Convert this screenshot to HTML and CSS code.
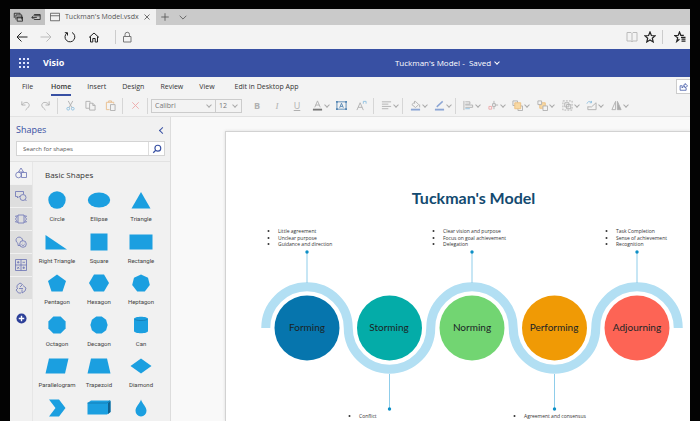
FILE: index.html
```html
<!DOCTYPE html>
<html lang="en">
<head>
    <meta charset="UTF-8">
    <meta name="viewport" content="width=device-width, initial-scale=1.0">
    <title>Tuckman's Model.vsdx</title>
    <link rel="stylesheet" href="styles.css">
</head>
<body>
    <div class="screen">
        <!-- browser tabs -->
        <div class="tab-strip">
            <div class="tab-tools">
                <button aria-label="Tabs set aside"><svg class="icon" viewBox="0 0 12 12"><path d="M1.500 7V1.500h7V3M3.500 9V3.500h7V9M5 6h6.500v5H5zM5 7h6.500"/></svg></button>
                <button aria-label="Set tabs aside"><svg class="icon" viewBox="0 0 12 12"><path d="M4 4V3h7v6H4V8M4 4.500h7M7 6.500H1M3 4.500L1 6.500l2 2"/></svg></button>
            </div>
            <div class="tab">
                <svg class="icon" viewBox="0 0 12 12"><path d="M.5 1.500h11v9H.5zM.5 4.500h11"/></svg>
                <span class="tab-title">Tuckman's Model.vsdx</span>
                <button aria-label="Close tab"><svg class="icon" viewBox="0 0 12 12"><path d="M3 3l6 6M9 3l-6 6"/></svg></button>
            </div>
            <button class="new-tab" aria-label="New tab"><svg class="icon" viewBox="0 0 12 12"><path d="M6 1.500v9M1.500 6h9"/></svg></button>
            <button aria-label="Tab previews"><svg class="icon" viewBox="0 0 12 12"><path d="M2 4.500L6 8.500l4-4"/></svg></button>
        </div>

        <!-- address bar -->
        <div class="address-bar">
            <button aria-label="Back"><svg class="icon" viewBox="0 0 12 12"><path d="M11.500 6H1M5.500 1.500L1 6l4.500 4.500"/></svg></button>
            <button class="off" aria-label="Forward"><svg class="icon" viewBox="0 0 12 12"><path d="M.5 6H11M6.500 1.500L11 6l-4.500 4.500"/></svg></button>
            <button aria-label="Refresh"><svg class="icon" viewBox="0 0 12 12"><path d="M3 2A4.900 4.900 0 1 0 8 1.500M3.500 4.500V1.700H.8"/></svg></button>
            <button aria-label="Home page"><svg class="icon" viewBox="0 0 12 12"><path d="M1 6.500L6 2l5 4.500M2.500 5.500V11h2.300V7.500h2.400V11h2.300V5.500"/></svg></button>
            <span class="bar-line"></span>
            <svg class="icon lock" viewBox="0 0 12 12"><path d="M1.500 5.500h7.500v5.500H1.500zM3 5.500V3.500a2.200 2.200 0 0 1 4.500 0v2"/></svg>
            <div class="address-end">
                <button class="off" aria-label="Reading view"><svg class="icon" viewBox="0 0 12 12"><path d="M6 2.500v8M1 1.500h4l1 1 1-1h4v8.500H7l-1 .8-1-.8H1z"/></svg></button>
                <button aria-label="Add to favorites"><svg class="icon bold" viewBox="0 0 12 12"><path d="M6 1l1.400 3.500 3.700.3-2.800 2.400.9 3.700L6 8.900l-3.200 2 .9-3.700L.9 4.800l3.700-.3z"/></svg></button>
                <span class="bar-line"></span>
                <button aria-label="Hub"><svg class="icon bold" viewBox="0 0 12 12"><path d="M5.500 8.200L2.700 10.500l1-3.700L.9 4.600l3.400-.3L5.500 1l1.300 3.300h3M7 6.300h4.500M7.500 8.200h4M7.500 10.100h4"/></svg></button>
            </div>
        </div>

        <header class="app-header">
            <button aria-label="App launcher"><svg class="waffle" viewBox="0 0 10 10"><path d="M0 0h2v2H0zM4 0h2v2H4zM8 0h2v2H8zM0 4h2v2H0zM4 4h2v2H4zM8 4h2v2H8zM0 8h2v2H0zM4 8h2v2H4zM8 8h2v2H8z"/></svg></button>
            <span class="app-name">Visio</span>
            <button class="doc-name">Tuckman's Model -&nbsp; Saved <i class="chevron"></i></button>
        </header>

        <nav class="menu">
            <a href="#">File</a>
            <a href="#" class="active">Home</a>
            <a href="#">Insert</a>
            <a href="#">Design</a>
            <a href="#">Review</a>
            <a href="#">View</a>
            <a href="#" class="desktop">Edit in Desktop App</a>
            <button class="share" aria-label="Share"><svg class="icon" viewBox="0 0 12 12"><path d="M4 5H1.500v6h8V8M4 8c0-3 1.500-4 4-4V2l3.500 3.200L8 8V6C6 6 5 6.500 4 8z"/></svg></button>
        </nav>

        <div class="toolbar">
            <button aria-label="Undo"><svg class="icon" viewBox="0 0 12 12"><path d="M2 1.500v4h4M2 5.500C4 2 9 1.500 10 5c.5 2-1 3-4 6"/></svg></button>
            <button aria-label="Redo"><svg class="icon" viewBox="0 0 12 12"><path d="M10 1.500v4H6M10 5.500C8 2 3 1.500 2 5c-.5 2 1 3 4 6"/></svg></button>
            <span class="line"></span>
            <button aria-label="Cut"><svg class="icon" viewBox="0 0 12 12"><path d="M3.500 1l4.200 7.500M8.500 1L4.300 8.500"/><g class="blue"><circle cx="3.500" cy="9.500" r="1.500"/><circle cx="8.500" cy="9.500" r="1.500"/></g></svg></button>
            <button aria-label="Copy"><svg class="icon" viewBox="0 0 12 12"><path d="M5 9H1V1.500h4.500V3M5 3.500h3.500l2.500 2.500v5H5zM8.500 3.500V6H11"/></svg></button>
            <button aria-label="Paste"><svg class="icon" viewBox="0 0 12 12"><path class="orange" d="M5 10.500H1.500V2.500h8V4M4 2.500V1h3v1.500"/><path d="M6 5h5v6.500H6z"/></svg></button>
            <span class="line"></span>
            <button aria-label="Delete"><svg class="icon red" viewBox="0 0 12 12"><path d="M2.500 2.500l7 7M9.500 2.500l-7 7"/></svg></button>
            <span class="line"></span>
            <label class="picker font">
                <select aria-label="Font"><option>Calibri</option></select>
                <i class="chevron"></i>
            </label>
            <label class="picker size">
                <select aria-label="Font size"><option>12</option></select>
                <i class="chevron"></i>
            </label>
            <button class="bold-letter">B</button>
            <button class="italic-letter">I</button>
            <button class="under-letter">U</button>
            <button class="drop" aria-label="Font color"><svg class="icon" viewBox="0 0 12 12"><path d="M3 8l3-7 3 7M4 5.500h4"/><path class="bar-dark" d="M1 10.500h10"/></svg><i class="chevron"></i></button>
            <button aria-label="Text box"><svg class="icon text-box" viewBox="0 0 12 12"><path d="M1 2h10v8H1z"/><path d="M4 8.500L6 3.500l2 5M4.700 7h2.600"/><path class="dots" d="M0 1h2v2H0zM10 1h2v2h-2zM0 9h2v2H0zM10 9h2v2h-2z"/></svg></button>
            <button aria-label="Grow font"><svg class="icon" viewBox="0 0 12 12"><path d="M1 11l3.500-8L8 11M2.300 8h4.400"/><path class="blue" d="M8 4V1.500h3V4"/></svg></button>
            <span class="line"></span>
            <button class="drop" aria-label="Align text"><svg class="icon" viewBox="0 0 12 12"><path d="M1 2h10M1 4.500h7M1 7h10M1 9.500h7"/></svg><i class="chevron"></i></button>
            <span class="line"></span>
            <button class="drop" aria-label="Fill"><svg class="icon" viewBox="0 0 12 12"><path d="M2 5l4-3.500L9.500 5 6 8.200zM5 4V1M10.500 5v3"/><path class="bar-blue" d="M1 10.500h10"/></svg><i class="chevron"></i></button>
            <button class="drop" aria-label="Line"><svg class="icon" viewBox="0 0 12 12"><path class="pen" d="M3 7.500L9.500 1.500"/><path class="bar-blue" d="M1 10.500h10"/></svg><i class="chevron"></i></button>
            <span class="line"></span>
            <div class="arrange">
                <button class="drop" aria-label="Align"><svg class="icon" viewBox="0 0 12 12"><path d="M1 1v10M2.500 2h5v2.500h-5M2.500 5.500h8V8h-8"/><path class="blue" d="M2.500 9.500h5"/></svg><i class="chevron"></i></button>
                <button class="drop" aria-label="Rotate"><svg class="icon" viewBox="0 0 12 12"><path d="M5 4h3v3H5zM6.500 1v3M8 5.500h3M6.500 7v3"/><path class="red" d="M1 7h3v3H1z"/></svg><i class="chevron"></i></button>
                <button class="drop" aria-label="Bring to front"><svg class="icon" viewBox="0 0 12 12"><path d="M1 1h5v5H1zM6.500 6.500h5v5h-5z"/><path class="box" d="M3 3h6.500v6.500H3z"/></svg><i class="chevron"></i></button>
                <button class="drop" aria-label="Send to back"><svg class="icon" viewBox="0 0 12 12"><path class="box" d="M3 3h6v6H3z"/><path class="paper" d="M1 1h4v4H1zM6.500 6.500h5v5h-5z"/></svg><i class="chevron"></i></button>
                <button class="drop" aria-label="Group"><svg class="icon" viewBox="0 0 12 12"><path d="M3 3h4.500v4.500H3zM5 5h4.500v4.500H5z"/><path stroke-dasharray="2 1.300" d="M1 1h10v10H1z"/></svg><i class="chevron"></i></button>
                <button class="drop" aria-label="Change shape"><svg class="icon" viewBox="0 0 12 12"><path d="M2 7v3.500h9V3L6 7.500H2"/><path class="blue" d="M1 4c1-3 4-3 5-1M6 1v2H4"/></svg><i class="chevron"></i></button>
                <button class="drop" aria-label="Flip"><svg class="icon" viewBox="0 0 12 12"><path d="M5 1.500v9H1z"/><path class="solid" d="M7 1.500v9h4z"/></svg><i class="chevron"></i></button>
            </div>
        </div>

        <main class="workspace">
            <aside class="shapes-panel">
                <div class="panel-head">
                    <div class="panel-title">
                        <h2>Shapes</h2>
                        <button aria-label="Collapse"><i class="chevron left"></i></button>
                    </div>
                    <div class="search">
                        <input type="text" placeholder="Search for shapes" aria-label="Search for shapes">
                        <button aria-label="Search"><svg class="icon" viewBox="0 0 12 12"><circle cx="7" cy="5" r="3.500"/><path d="M4.500 7.500L1.500 10.500"/></svg></button>
                    </div>
                </div>
                <div class="panel-body">
                    <div class="stencils">
                        <button class="selected" aria-label="Basic shapes"><svg class="icon" viewBox="0 0 12 12"><path d="M6 1L3.500 5h5zM6.500 5.500h5v5h-5z"/><circle cx="3.500" cy="8" r="2.800"/></svg></button>
                        <button aria-label="Callouts"><svg class="icon" viewBox="0 0 12 12"><path d="M5 6.500H4L2.500 8V6.500H.5v-5h8V4"/><circle cx="8" cy="7.500" r="3"/><path d="M10 9.500l1.500 1.500"/></svg></button>
                        <button aria-label="Banners"><svg class="icon" viewBox="0 0 12 12"><path d="M3 2h6v8H3zM3 3H.5l1 1.500-1 1.500 1 1.500L.5 9H3M9 3h2.500l-1 1.500 1 1.500-1 1.500 1 1.500H9"/></svg></button>
                        <button aria-label="Icons"><svg class="icon" viewBox="0 0 12 12"><path d="M3 7.500C1 6 .5 4 1.500 2.500S5 .5 6.500 2 7.500 4.500 7 5"/><circle cx="8" cy="8" r="3.300"/><path d="M3 7.500v2h2M6.500 8.500c.8 1.300 2.300 1.300 3 0M7 7h.3M9 7h.3"/></svg></button>
                        <button aria-label="Tables"><svg class="icon" viewBox="0 0 12 12"><path d="M.5.500h11v11H.5zM.5 6h11M6 .5v11M2 3.300h2.500M3.200 2v2.500M7.500 3.300H10M2.200 7.800l2 2M4.200 7.800l-2 2M7.500 8.800H10M8.700 7.500V10"/></svg></button>
                        <button aria-label="Cycles"><svg class="icon" viewBox="0 0 12 12"><path d="M2 6V3.500L5 1l2.500 1.500L5 5M3 6l-2 2 2.500 3H6M8 3.500L11 6l-1 3-3 2V7.500M4 6.500h4"/></svg></button>
                        <button class="add" aria-label="Add shapes"><svg viewBox="0 0 12 12"><circle cx="6" cy="6" r="5.500"/><path d="M6 3v6M3 6h6"/></svg></button>
                    </div>
                    <section class="library">
                        <h3>Basic Shapes</h3>
                        <div class="shape-grid">
                            <figure><svg viewBox="0 0 24 18"><circle cx="12" cy="9" r="8.700"/></svg><figcaption>Circle</figcaption></figure>
                            <figure><svg viewBox="0 0 24 18"><ellipse cx="12" cy="9" rx="11.200" ry="7.500"/></svg><figcaption>Ellipse</figcaption></figure>
                            <figure><svg viewBox="0 0 24 18"><path d="M12 1l9.500 16.500h-19z"/></svg><figcaption>Triangle</figcaption></figure>
                            <figure><svg viewBox="0 0 24 18"><path d="M.5 2L22 16.500H.5z"/></svg><figcaption>Right Triangle</figcaption></figure>
                            <figure><svg viewBox="0 0 24 18"><path d="M3.500.5h17v17h-17z"/></svg><figcaption>Square</figcaption></figure>
                            <figure><svg viewBox="0 0 24 18"><path d="M.5 1.500h23v15H.5z"/></svg><figcaption>Rectangle</figcaption></figure>
                            <figure><svg viewBox="0 0 24 18"><path d="M12 .5l9 6.500-3.500 10.500h-11L3 7z"/></svg><figcaption>Pentagon</figcaption></figure>
                            <figure><svg viewBox="0 0 24 18"><path d="M7 .5h10L22 9l-5 8.500H7L2 9z"/></svg><figcaption>Hexagon</figcaption></figure>
                            <figure><svg viewBox="0 0 24 18"><path d="M12 .5l7 3.300 1.800 7.200-5 6.500H8.200l-5-6.500L5 3.800z"/></svg><figcaption>Heptagon</figcaption></figure>
                            <figure><svg viewBox="0 0 24 18"><path d="M8.400.5h7.200l5 5v7l-5 5H8.400l-5-5v-7z"/></svg><figcaption>Octagon</figcaption></figure>
                            <figure><svg viewBox="0 0 24 18"><path d="M9.300.5h5.400l4.400 3.200L20.600 9l-1.500 5.300-4.400 3.200H9.300l-4.400-3.200L3.400 9l1.500-5.300z"/></svg><figcaption>Decagon</figcaption></figure>
                            <figure><svg viewBox="0 0 24 18"><path d="M5 3c0-3 14-3 14 0v12c0 3-14 3-14 0z"/><path class="edge" d="M5.500 3c1 2 12 2 13 0"/></svg><figcaption>Can</figcaption></figure>
                            <figure><svg viewBox="0 0 24 18"><path d="M4 1.500h19.500L20 16.500H.5z"/></svg><figcaption>Parallelogram</figcaption></figure>
                            <figure><svg viewBox="0 0 24 18"><path d="M4 1.500h16l3.500 15H.5z"/></svg><figcaption>Trapezoid</figcaption></figure>
                            <figure><svg viewBox="0 0 24 18"><path d="M12 1.500L22.500 9 12 16.500 1.500 9z"/></svg><figcaption>Diamond</figcaption></figure>
                            <figure aria-label="Chevron"><svg viewBox="0 0 24 18"><path d="M4 .5h10L20.500 9 14 17.500H4L10.500 9z"/></svg></figure>
                            <figure aria-label="Cube"><svg viewBox="0 0 24 18"><path d="M.5 4L4 1.500h19.500V13L20 15.500H.5z"/><path class="edge" d="M.5 4H20l3-2.500"/><path class="side" d="M21 4l2.500-2V13L21 15z"/></svg></figure>
                            <figure aria-label="Drop"><svg viewBox="0 0 24 18"><path d="M12 .5c1 4 5.500 7 5.500 11.300a5.500 5.700 0 0 1-11 0C6.500 7.500 11 4.500 12 .5z"/></svg></figure>
                        </div>
                    </section>
                </div>
            </aside>

            <div class="canvas">
                <div class="page">
                    <svg class="diagram" width="464" height="310" viewBox="0 0 464 310">
                        <text class="title" x="247.500" y="72">Tuckman's Model</text>

                        <path class="wave" d="M39.750 196a41.250 41.250 0 0 1 82.500 0a41.250 41.250 0 0 0 82.500 0a41.250 41.250 0 0 1 82.500 0a41.250 41.250 0 0 0 82.500 0a41.250 41.250 0 0 1 82.500 0"/>
                        <path class="link" d="M81 151v-31M246 151v-31M411 151v-31M163.500 242v35M328.500 242v35"/>
                        <g class="dot">
                            <circle cx="81" cy="120" r="1.700"/>
                            <circle cx="246" cy="120" r="1.700"/>
                            <circle cx="411" cy="120" r="1.700"/>
                            <circle cx="163.500" cy="277" r="1.700"/>
                            <circle cx="328.500" cy="277" r="1.700"/>
                        </g>

                        <!-- stages -->
                        <circle cx="81" cy="196" r="32.500" fill="#0675ad"/>
                        <circle cx="163.500" cy="196" r="32.500" fill="#04aca8"/>
                        <circle cx="246" cy="196" r="32.500" fill="#72d572"/>
                        <circle cx="328.500" cy="196" r="32.500" fill="#f09a05"/>
                        <circle cx="411" cy="196" r="32.500" fill="#fd6455"/>
                        <g class="stage">
                            <text x="81" y="199">Forming</text>
                            <text x="163" y="199">Storming</text>
                            <text x="246" y="199">Norming</text>
                            <text x="328" y="199">Performing</text>
                            <text x="411" y="199">Adjourning</text>
                        </g>

                        <g class="bullets">
                            <circle cx="42.500" cy="99" r="1"/><circle cx="42.500" cy="106" r="1"/><circle cx="42.500" cy="112" r="1"/>
                            <circle cx="207.500" cy="99" r="1"/><circle cx="207.500" cy="106" r="1"/><circle cx="207.500" cy="112" r="1"/>
                            <circle cx="380.500" cy="99" r="1"/><circle cx="380.500" cy="106" r="1"/><circle cx="380.500" cy="112" r="1"/>
                            <circle cx="123.500" cy="284" r="1"/><circle cx="288.500" cy="284" r="1"/>
                        </g>
                        <g class="notes">
                            <text x="52" y="101">Little agreement</text>
                            <text x="52" y="108">Unclear purpose</text>
                            <text x="52" y="114">Guidance and direction</text>
                            <text x="217" y="101">Clear vision and purpose</text>
                            <text x="217" y="108">Focus on goal achievement</text>
                            <text x="217" y="114">Delegation</text>
                            <text x="390" y="101">Task Completion</text>
                            <text x="390" y="108">Sense of achievement</text>
                            <text x="390" y="114">Recognition</text>
                            <text x="133" y="286">Conflict</text>
                            <text x="298" y="286">Agreement and consensus</text>
                        </g>
                    </svg>
                </div>
            </div>
        </main>
    </div>
</body>
</html>
```
FILE: styles.css
```css
* {
    box-sizing: border-box;
}
body {
    margin: 0;
    height: 100vh;
    padding: 9px 10px 0;
    overflow: hidden;
    background: #030303;
    font-family: "Open Sans", "Noto Sans", sans-serif;
    font-size: 7px;
    line-height: 10px;
    color: #444;
}
button, input, select {
    margin: 0;
    padding: 0;
    border: 0;
    background: none;
    font: inherit;
    color: inherit;
}
button {
    display: flex;
    align-items: center;
    justify-content: center;
}
h2, h3, figure {
    margin: 0;
    font-weight: normal;
}
.screen {
    height: 100%;
    display: flex;
    flex-direction: column;
    overflow: hidden;
    background: #f3f3f3;
}
.icon {
    width: 12px;
    height: 12px;
    flex: none;
    fill: none;
    stroke: currentColor;
    stroke-width: 1;
}
.chevron {
    width: 4px;
    height: 4px;
    flex: none;
    border: solid currentColor;
    border-width: 0 1px 1px 0;
    transform: rotate(45deg);
}
.chevron.left {
    width: 5px;
    height: 5px;
    transform: rotate(135deg);
}

/* browser */
.tab-strip {
    display: flex;
    flex: none;
    height: 16px;
    background: #cacaca;
    color: #555;
}
.tab-strip .icon {
    width: 10px;
    height: 10px;
}
.tab-tools {
    display: flex;
    width: 35px;
    padding-left: 3px;
    gap: 8px;
    color: #222;
    background: #c2c2c2;
}
.tab {
    display: flex;
    align-items: center;
    width: 111px;
    padding: 0 4px 0 5px;
    background: #f1f1f1;
}
.tab-title {
    flex: 1;
    padding-left: 5px;
    white-space: nowrap;
}
.new-tab {
    margin: 0 8px 0 4px;
}
.address-bar {
    display: flex;
    flex: none;
    align-items: center;
    height: 24px;
    padding: 0 4px 0 6px;
    gap: 12px;
    background: #f3f3f3;
    color: #222;
}
.address-bar .off {
    color: #bbb;
}
.address-bar .lock {
    color: #777;
    margin-left: -6px;
}
.bar-line {
    width: 1px;
    height: 14px;
    margin-left: 3px;
    background: #ccc;
}
.address-end {
    display: flex;
    align-items: center;
    gap: 6px;
    margin-left: auto;
}
.address-end .bar-line {
    margin: 0 5px 0 0;
}
.icon.bold {
    stroke-width: 1.2;
}

/* Visio header */
.app-header {
    display: flex;
    flex: none;
    align-items: center;
    height: 28px;
    padding-left: 9px;
    background: #3850a3;
    color: #fff;
    position: relative;
}
.waffle {
    width: 10px;
    height: 10px;
    fill: #dfe5ff;
}
.app-name {
    margin-left: 14px;
    font-size: 9px;
    font-weight: bold;
}
.doc-name {
    position: absolute;
    left: 0;
    right: 0;
    margin: 0 auto;
    padding-left: 194px;
    gap: 4px;
    font-size: 8px;
    line-height: 12px;
}
.doc-name .chevron {
    margin-top: -2px;
}

/* menu and toolbar */
.menu {
    display: flex;
    flex: none;
    height: 20px;
    padding-left: 12px;
    gap: 16px;
}
.menu a {
    height: 19px;
    line-height: 20px;
    color: #333;
    text-decoration: none;
}
.menu .active {
    margin-left: 2px;
    font-weight: 600;
    border-bottom: 2px solid #3850a3;
}
.menu .desktop {
    margin-left: 4px;
}
.share {
    width: 14px;
    height: 15px;
    margin: 2px 0 0 auto;
    border: 1px solid #ccc;
    border-right: 0;
    background: #fff;
    color: #3850a3;
}
.share .icon {
    width: 9px;
    height: 9px;
}
.toolbar {
    display: flex;
    flex: none;
    align-items: center;
    height: 20px;
    padding: 0 0 2px 5px;
    border-bottom: 1px solid #e2e2e2;
    color: #b0b0b0;
}
.toolbar button {
    width: 20px;
    height: 16px;
    flex: none;
}
.toolbar .icon {
    width: 11px;
    height: 11px;
}
.toolbar .drop {
    width: 24px;
    gap: 2px;
    padding-left: 3px;
}
.toolbar .chevron {
    margin-top: -2px;
    border-color: #aaa;
}
.line {
    width: 1px;
    height: 16px;
    margin: 0 2px;
    flex: none;
    background: #d6d6d6;
}
.picker {
    display: flex;
    align-items: center;
    flex: none;
    height: 14px;
    padding: 0 4px 0 3px;
    border: 1px solid #ccc;
    color: #777;
}
.picker select {
    flex: 1;
    min-width: 0;
    appearance: none;
    outline: 0;
}
.picker.font {
    width: 65px;
    margin-left: 1px;
}
.picker.size {
    width: 27px;
    margin: 0 5px 0 -1px;
}
.bold-letter, .italic-letter, .under-letter {
    font-size: 9px;
}
.bold-letter {
    font-weight: bold;
}
.italic-letter {
    font-family: "Liberation Serif", serif;
    font-style: italic;
}
.under-letter {
    text-decoration: underline;
}
.arrange {
    display: flex;
    width: 172px;
}
.toolbar .arrange .drop {
    flex: 1;
}
.blue {
    stroke: #8fc1e0;
}
.red {
    stroke: #eea9a9;
}
.orange {
    stroke: #e8bd8c;
}
.box {
    fill: #f8d9a4;
    stroke: #ecc182;
}
.paper {
    fill: #f3f3f3;
}
.solid {
    fill: #aaa;
}
.bar-dark {
    stroke: #777;
    stroke-width: 2;
}
.bar-blue {
    stroke: #8ba5d4;
    stroke-width: 2;
}
.pen {
    stroke: #8ba5d4;
    stroke-width: 1.5;
}
.text-box {
    color: #5587b4;
}
.dots {
    fill: #5587b4;
    stroke: none;
}

/* shapes panel */
.workspace {
    display: flex;
    flex: 1;
    min-height: 0;
}
.shapes-panel {
    display: flex;
    flex-direction: column;
    flex: none;
    width: 161px;
    background: #f1f1f1;
    border-right: 1px solid #ddd;
}
.panel-head {
    height: 45px;
    padding: 7px 5px 0 6px;
    border-bottom: 1px solid #e2e2e2;
}
.panel-title {
    display: flex;
    justify-content: space-between;
    align-items: center;
    height: 12px;
    color: #3850a3;
}
.panel-title h2 {
    font-size: 9px;
    line-height: 12px;
}
.search {
    display: flex;
    height: 15px;
    margin-top: 5px;
    border: 1px solid #d4d4d4;
    background: #fff;
}
.search input {
    flex: 1;
    min-width: 0;
    padding-left: 6px;
    font-size: 6px;
}
.search input::placeholder {
    color: #555;
    opacity: 1;
}
.search button {
    width: 16px;
    border-left: 1px solid #ddd;
    color: #3850a3;
}
.search .icon {
    width: 10px;
    height: 10px;
    stroke-width: 1.4;
}
.panel-body {
    display: flex;
    flex: 1;
    min-height: 0;
}
.stencils {
    width: 23px;
    border-right: 1px solid #e6e6e6;
}
.stencils button {
    width: 100%;
    height: 22px;
    margin-bottom: 1px;
    background: #dedede;
    color: #6a72b5;
}
.stencils .icon {
    stroke-width: 0.8;
}
.stencils .selected {
    background: #f3f3f3;
}
.stencils .add {
    margin-top: 8px;
    background: none;
}
.add svg {
    width: 11px;
    height: 11px;
    fill: #2c3f98;
}
.add path {
    stroke: #fff;
    stroke-width: 1.5;
}
.library {
    flex: 1;
    padding: 7px 8px 0 3px;
    overflow: hidden;
}
.library h3 {
    padding-left: 9px;
    font-size: 8px;
    line-height: 12px;
    color: #333;
}
.shape-grid {
    display: grid;
    grid-template-columns: repeat(3, 1fr);
    grid-template-rows: repeat(6, 1fr);
    height: 249px;
    margin-top: 10px;
}
.shape-grid figure {
    display: flex;
    flex-direction: column;
    align-items: center;
    gap: 6px;
    min-width: 0;
}
.shape-grid svg {
    width: 24px;
    height: 18px;
    flex: none;
    fill: #1b9fe0;
}
.shape-grid figcaption {
    font-family: Roboto, sans-serif;
    font-size: 6px;
    line-height: 8px;
    white-space: nowrap;
    color: #444;
}
.edge {
    fill: none;
    stroke: #1373a8;
    stroke-width: 0.7;
}
.side {
    fill: #11608e;
}

/* drawing page */
.canvas {
    flex: 1;
    min-width: 0;
    padding: 14px 0 0 54px;
    background: #f9f9f9;
    overflow: hidden;
}
.page {
    height: 100%;
    border: 1px solid #d2d2d2;
    border-width: 1px 0 0 1px;
    background: #fff;
    box-shadow: 0 0 3px #ddd;
    overflow: hidden;
}
.diagram {
    display: block;
}
.title {
    font-family: Lato, "Open Sans", sans-serif;
    font-size: 16px;
    font-weight: bold;
    text-anchor: middle;
    fill: #134a70;
}
.wave {
    fill: none;
    stroke: #b2dff3;
    stroke-width: 9;
}
.link {
    stroke: #8fcdea;
    stroke-width: 1;
}
.dot {
    fill: #0c8fc6;
}
.stage {
    font-family: Lato, "Open Sans", sans-serif;
    font-size: 10px;
    text-anchor: middle;
    fill: #1b2426;
}
.bullets {
    fill: #333;
}
.notes {
    font-size: 5px;
    fill: #333;
}
```
